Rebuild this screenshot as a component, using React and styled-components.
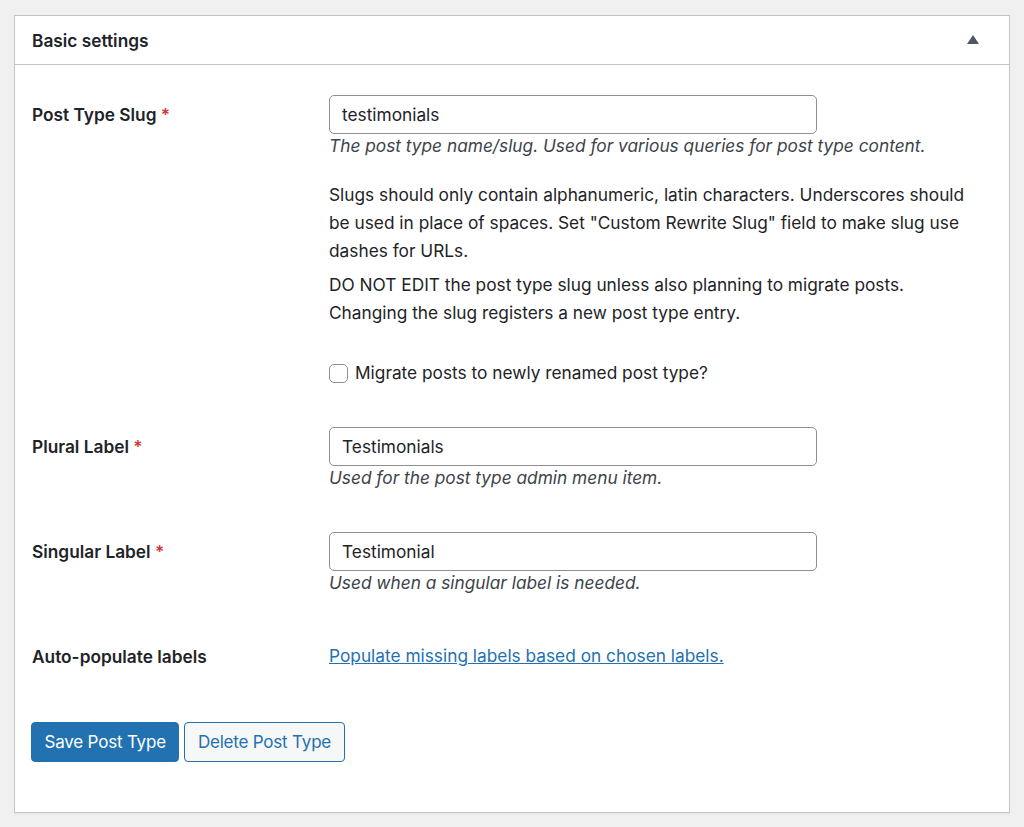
import React from 'react';
import styled, { createGlobalStyle } from 'styled-components';

const GlobalStyle = createGlobalStyle`
  html, body {
    margin: 0;
    padding: 0;
    background: #f0f0f1;
  }
  body {
    font-family: Inter, "Liberation Sans", sans-serif;
    color: #1d2327;
  }
`;

const App = () => {
  return (
    <Page>
      <GlobalStyle />
      <Postbox>
        <Header>
          <HeaderTitle>Basic settings</HeaderTitle>
          <Toggle>
            <svg width="12" height="9" viewBox="0 0 12 9">
              <path d="M6 0 L12 9 L0 9 Z" fill="#50575e" />
            </svg>
          </Toggle>
        </Header>

        <Body>
          <Row $gap={40}>
            <Label>
              Post Type Slug <Required>*</Required>
            </Label>
            <Field>
              <TextInput defaultValue="testimonials" />
              <Description>The post type name/slug. Used for various queries for post type content.</Description>
              <Notes>
                <p>
                  Slugs should only contain alphanumeric, latin characters. Underscores should be used in place of
                  spaces. Set "Custom Rewrite Slug" field to make slug use dashes for URLs.
                </p>
                <p>
                  DO NOT EDIT the post type slug unless also planning to migrate posts. Changing the slug registers a
                  new post type entry.
                </p>
              </Notes>
              <CheckLabel>
                <Checkbox type="checkbox" />
                Migrate posts to newly renamed post type?
              </CheckLabel>
            </Field>
          </Row>

          <Row $gap={42}>
            <Label>
              Plural Label <Required>*</Required>
            </Label>
            <Field>
              <TextInput defaultValue="Testimonials" />
              <Description>Used for the post type admin menu item.</Description>
            </Field>
          </Row>

          <Row $gap={47}>
            <Label>
              Singular Label <Required>*</Required>
            </Label>
            <Field>
              <TextInput defaultValue="Testimonial" />
              <Description>Used when a singular label is needed.</Description>
            </Field>
          </Row>

          <Row $gap={52}>
            <Label $short>Auto-populate labels</Label>
            <Field>
              <LinkText href="#">Populate missing labels based on chosen labels.</LinkText>
            </Field>
          </Row>

          <Actions>
            <Button $primary>Save Post Type</Button>
            <Button>Delete Post Type</Button>
          </Actions>
        </Body>
      </Postbox>
    </Page>
  );
};

const Page = styled.div`
  padding: 15px 14px 14px 14px;
`;

const Postbox = styled.div`
  background: #fff;
  border: 1px solid #c3c4c7;
  box-shadow: 0 1px 1px rgba(0, 0, 0, 0.04);
`;

const Header = styled.div`
  height: 48px;
  display: flex;
  align-items: center;
  justify-content: space-between;
  padding: 0 30px 0 17px;
  border-bottom: 1px solid #c3c4c7;
`;

const HeaderTitle = styled.h2`
  margin: 0;
  font-size: 17.3px;
  font-weight: 600;
  color: #1d2327;
`;

const Toggle = styled.span`
  display: flex;
  align-items: center;
  margin-top: -2px;
`;

const Body = styled.div`
  padding: 30px 16px 50px 16px;
`;

const Row = styled.div`
  display: grid;
  grid-template-columns: 297px 1fr;
  align-items: start;
  padding-left: 1px;
  padding-bottom: ${(p) => p.$gap}px;
`;

const Label = styled.div`
  height: ${(p) => (p.$short ? '28px' : '39px')};
  display: flex;
  align-items: center;
  font-size: 17.3px;
  font-weight: 600;
  color: #1d2327;
  white-space: pre;
`;

const Required = styled.span`
  color: #d63638;
`;

const Field = styled.div`
  display: flex;
  flex-direction: column;
  align-items: flex-start;
`;

const TextInput = styled.input`
  width: 488px;
  height: 39px;
  box-sizing: border-box;
  border: 1px solid #8c8f94;
  border-radius: 5px;
  padding: 0 12px;
  font-family: inherit;
  font-size: 17.3px;
  color: #1d2327;
  background: #fff;
  outline: none;
`;

const Description = styled.p`
  margin: 0;
  font-size: 17.3px;
  line-height: 24px;
  font-style: italic;
  color: #3c434a;
`;

const Notes = styled.div`
  margin-top: 23px;
  font-size: 17.3px;
  line-height: 28px;
  color: #1d2327;

  p {
    margin: 0 0 6px 0;
    max-width: 650px;
  }
`;

const CheckLabel = styled.label`
  display: flex;
  align-items: center;
  margin-top: 26px;
  font-size: 17.3px;
  line-height: 28px;
  color: #1d2327;
`;

const Checkbox = styled.input`
  appearance: none;
  width: 19px;
  height: 19px;
  margin: 0 7px 0 0;
  border: 1px solid #8c8f94;
  border-radius: 5px;
  background: #fff;
`;

const LinkText = styled.a`
  font-size: 17.3px;
  line-height: 28px;
  color: #2271b1;
  text-decoration: underline;
`;

const Actions = styled.div`
  display: flex;
  gap: 5px;
`;

const Button = styled.button`
  height: 40px;
  padding: 0 12.5px;
  border-radius: 4px;
  font-family: inherit;
  font-size: 17px;
  letter-spacing: -0.2px;
  border: 1px solid #2271b1;
  background: ${(p) => (p.$primary ? '#2271b1' : '#f6f7f7')};
  color: ${(p) => (p.$primary ? '#fff' : '#2271b1')};
  cursor: pointer;
`;

export default App;
